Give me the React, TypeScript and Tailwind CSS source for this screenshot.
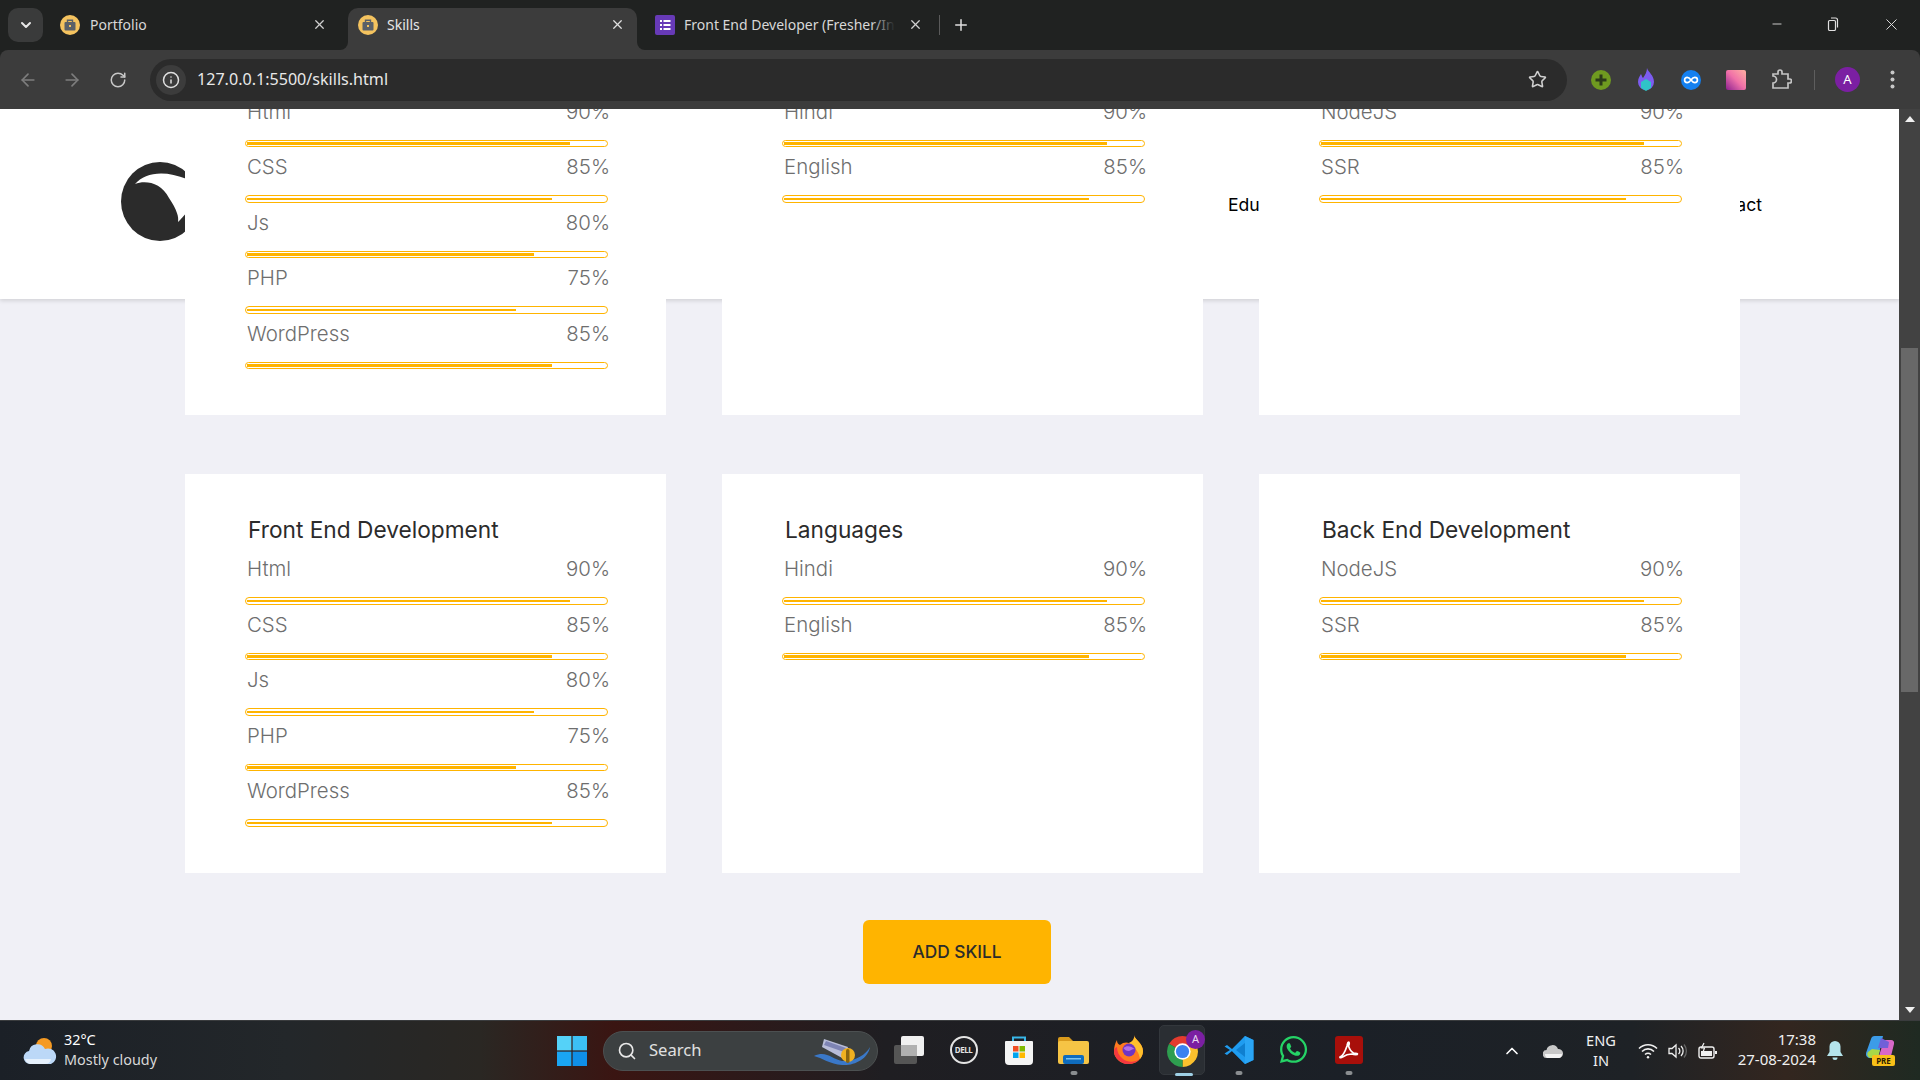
import React from "react";
import { ArrowLeft, ArrowRight, RotateCw, Info, Star, X, Plus, ChevronDown, ChevronUp, Minus, Search } from "lucide-react";
import { FaWhatsapp } from "react-icons/fa";

const chromeFont = { fontFamily: '"Noto Sans", "Open Sans", sans-serif' };

function Favicon() {
  return (
    <svg width="20" height="20" viewBox="0 0 20 20">
      <circle cx="10" cy="10" r="10" fill="#f4c35f" />
      <rect x="4.5" y="7" width="11" height="8.5" rx="1" fill="#5a6068" />
      <path d="M7.5 7V5.2h5V7" fill="none" stroke="#5a6068" strokeWidth="1.4" />
      <rect x="9" y="10" width="2" height="2" fill="#f4c35f" />
    </svg>
  );
}

function FormFavicon() {
  return (
    <svg width="20" height="20" viewBox="0 0 20 20">
      <rect width="20" height="20" rx="2" fill="#673ab7" />
      <rect x="5" y="5" width="2" height="2" fill="#fff" />
      <rect x="8.5" y="5" width="7" height="2" fill="#fff" />
      <rect x="5" y="9" width="2" height="2" fill="#fff" />
      <rect x="8.5" y="9" width="7" height="2" fill="#fff" />
      <rect x="5" y="13" width="2" height="2" fill="#fff" />
      <rect x="8.5" y="13" width="7" height="2" fill="#fff" />
    </svg>
  );
}

function TabStrip() {
  return (
    <div className="h-[50px] bg-[#202221] flex items-end shrink-0 text-[14px]" style={chromeFont}>
      <div className="self-start mt-[8px] ml-[8px] w-[35px] h-[34px] rounded-[10px] bg-[#3a3b3b] flex items-center justify-center">
        <ChevronDown size={16} strokeWidth={3} className="text-[#e8e8e8]" />
      </div>
      <div className="w-[305px] h-[42px] pl-[17px] pr-[21px] pb-[9px] flex items-center text-[#d8d8d8]">
        <Favicon />
        <span className="ml-[10px] flex-1">Portfolio</span>
        <X size={15} strokeWidth={2} className="text-[#d0d0d0]" />
      </div>
      <div className="relative w-[289px] h-[42px] pl-[10px] pr-[12px] pb-[9px] flex items-center rounded-t-[10px] bg-[#3c3c3c] text-[#e8e8e8]">
        <Favicon />
        <span className="ml-[9px] flex-1">Skills</span>
        <X size={15} strokeWidth={2} className="text-[#e0e0e0]" />
        <div className="absolute -left-[8px] bottom-0 w-[8px] h-[8px] bg-[#3c3c3c]">
          <div className="w-[8px] h-[8px] bg-[#202221] rounded-br-[8px]" />
        </div>
        <div className="absolute -right-[8px] bottom-0 w-[8px] h-[8px] bg-[#3c3c3c]">
          <div className="w-[8px] h-[8px] bg-[#202221] rounded-bl-[8px]" />
        </div>
      </div>
      <div className="h-[42px] pl-[18px] pb-[9px] flex items-center text-[#d8d8d8]">
        <FormFavicon />
        <div className="relative ml-[9px] w-[211px] overflow-hidden whitespace-nowrap">
          Front End Developer (Fresher/Internship)
          <div className="absolute right-0 top-0 bottom-0 w-[24px] bg-gradient-to-r from-transparent to-[#202221]" />
        </div>
        <X size={15} strokeWidth={2} className="ml-[13px] text-[#d0d0d0]" />
        <div className="ml-[16px] w-[1px] h-[20px] bg-[#5a5a5a]" />
        <Plus size={18} strokeWidth={2} className="ml-[12px] text-[#e0e0e0]" />
      </div>
      <div className="ml-auto h-[50px] flex items-center pb-[2px] text-[#e0e0e0]">
        <Minus size={14} strokeWidth={1.5} />
        <svg className="ml-[42px]" width="14" height="14" viewBox="0 0 14 14" fill="none" stroke="#e0e0e0" strokeWidth="1.2">
          <rect x="2.5" y="3.5" width="7" height="10" rx="1.2" />
          <path d="M5 1h4.500a2 2 0 0 1 2 2v7.500" />
        </svg>
        <X size={19} strokeWidth={1.2} className="ml-[42px] mr-[19px]" />
      </div>
    </div>
  );
}

function Toolbar() {
  return (
    <div className="h-[59px] bg-[#3c3c3c] rounded-t-[8px] flex items-center shrink-0" style={chromeFont}>
      <ArrowLeft size={20} strokeWidth={2} className="ml-[18px] text-[#7d7d7d]" />
      <ArrowRight size={20} strokeWidth={2} className="ml-[24px] text-[#7d7d7d]" />
      <RotateCw size={18} strokeWidth={2} className="ml-[27px] text-[#c8c8c8]" />
      <div className="ml-[23px] w-[1417px] h-[42px] rounded-full bg-[#2b2b2b] flex items-center pl-[6px] pr-[20px]">
        <div className="w-[30px] h-[30px] rounded-full bg-[#3c3c3c] flex items-center justify-center">
          <Info size={18} strokeWidth={2} className="text-[#e0e0e0]" />
        </div>
        <span className="ml-[11px] text-[16.1px] text-[#e8e8e8] flex-1">127.0.0.1:5500/skills.html</span>
        <Star size={19} strokeWidth={2} className="text-[#d0d0d0]" />
      </div>
      <svg className="ml-[24px]" width="20" height="20" viewBox="0 0 20 20">
        <circle cx="10" cy="10" r="10" fill="#6f9a20" />
        <path d="M10 4.500v11M4.500 10h11" stroke="#2c3a1a" strokeWidth="3" />
      </svg>
      <svg className="ml-[25px]" width="20" height="24" viewBox="0 0 20 24">
        <path d="M11 0c1 4 7 7 7 14a8 8 0 0 1-16 0c0-4 2-6 3-8 1 2 1 3 2 4 2-3 4-6 4-10z" fill="#7c5cf0" />
        <path d="M10 11l5 3v6l-5 3-5-3v-6z" fill="#2fc4c8" />
      </svg>
      <svg className="ml-[25px]" width="20" height="20" viewBox="0 0 20 20">
        <circle cx="10" cy="10" r="10" fill="#1480f0" />
        <path d="M10 10c-1.500-2-2.600-2.600-3.800-2.600a2.600 2.600 0 0 0 0 5.200c1.200 0 2.300-.6 3.800-2.600s2.600-2.600 3.800-2.600a2.600 2.600 0 0 1 0 5.200c-1.200 0-2.300-.6-3.800-2.600z" fill="none" stroke="#fff" strokeWidth="1.7" />
      </svg>
      <div className="ml-[25px] w-[20px] h-[20px] rounded-[2px] bg-gradient-to-bl from-[#ffb0a0] via-[#f070a8] to-[#901a90]" />
      <svg className="ml-[25px]" width="21" height="21" viewBox="0 0 21 21" fill="none" stroke="#c4c4c4" strokeWidth="1.7">
        <path d="M2 5h5V3a2 2 0 0 1 4 0v2h6v5h1.500a2 2 0 0 1 0 4H17v5H2v-5a3 3 0 0 0 0-7z" />
      </svg>
      <div className="ml-[22px] w-[1px] h-[20px] bg-[#5e5e5e]" />
      <div className="ml-[20px] w-[25px] h-[25px] rounded-full bg-[#7b1fa2] flex items-center justify-center text-white text-[13px]">A</div>
      <svg className="ml-[30px]" width="5" height="19" viewBox="0 0 5 19" fill="#c8c8c8">
        <circle cx="2.500" cy="2.500" r="2" />
        <circle cx="2.500" cy="9.500" r="2" />
        <circle cx="2.500" cy="16.500" r="2" />
      </svg>
    </div>
  );
}

type Skill = [string, number];

function Row({ name, pct, thin }: { name: string; pct: number; thin: boolean }) {
  return (
    <div className="mb-[4px]">
      <div className="h-[32px] pl-[2px] -mr-[2px] flex justify-between items-center text-[20.4px] font-light text-[#6e6e6e]">
        <span>{name}</span>
        <span>{pct}%</span>
      </div>
      <div className={thin ? "mt-[12px] h-[8px] border border-[#ffb400] rounded-[4px] px-[1px] py-[2px]" : "mt-[12px] h-[7px] border border-[#ffb400] rounded-[4px] px-[1px] py-[1px]"}>
        <div className="h-full bg-[#ffb400]" style={{ width: `${pct}%` }} />
      </div>
    </div>
  );
}

function Card({ title, skills, first, cls }: { title: string; skills: Skill[]; first: boolean; cls: string }) {
  return (
    <div className={`w-[481px] bg-white pl-[60px] pr-[58px] pt-[40px] ${cls}`}>
      <h3 className="h-[32px] mb-[7px] pl-[3px] flex items-center text-[22.7px] font-normal text-[#2b2b2b]">{title}</h3>
      {skills.map(([n, p], i) => (
        <Row key={n} name={n} pct={p} thin={first ? i % 2 === 1 : i % 2 === 0} />
      ))}
    </div>
  );
}

const fe: Skill[] = [["Html", 90], ["CSS", 85], ["Js", 80], ["PHP", 75], ["WordPress", 85]];
const lang: Skill[] = [["Hindi", 90], ["English", 85]];
const be: Skill[] = [["NodeJS", 90], ["SSR", 85]];

function CardRow({ first }: { first: boolean }) {
  const cls = first ? "h-[398px]" : "h-[399px]";
  return (
    <div className="flex gap-[56px] pl-[185px]">
      <Card title="Front End Development" skills={fe} first={first} cls={cls} />
      <Card title="Languages" skills={lang} first={first} cls={cls} />
      <Card title="Back End Development" skills={be} first={first} cls={cls} />
    </div>
  );
}

function Page() {
  return (
    <div className="flex-1 flex min-h-0 bg-[#f0f0f6] overflow-hidden" style={{ fontFamily: 'Inter, "Liberation Sans", sans-serif' }}>
      <div className="relative flex-1 min-w-0 overflow-hidden">
        <header className="absolute left-0 right-0 top-0 h-[190px] bg-white shadow-[0_2px_4px_rgba(0,0,0,0.12)] flex items-center pl-[121px] pr-[137px]">
          <svg className="mb-[6px]" width="78" height="79" viewBox="0 0 78 79">
            <ellipse cx="39" cy="39.500" rx="39" ry="39.500" fill="#2b2b2b" />
            <path d="M14 22C24 18 40 20 48 36C56 48 58 55 57 60C60 57 62 55 66 50L66 17C44 8 24 10 14 22Z" fill="#ffffff" />
          </svg>
          <nav className="ml-auto w-[534px] mt-[3px] flex justify-between text-[17.6px] font-normal text-black">
            <span>Education</span>
            <span>Contact</span>
          </nav>
        </header>
        <main className="relative z-10 -mt-[92px] flex flex-col">
          <CardRow first={true} />
          <div className="mt-[59px]">
            <CardRow first={false} />
          </div>
          <div className="mt-[47px] pl-[863px]">
            <button className="w-[188px] h-[64px] rounded-[6px] bg-[#ffb400] text-[17.3px] font-medium text-[#2b2b2b]">ADD SKILL</button>
          </div>
        </main>
      </div>
      <div className="w-[21px] bg-[#424242] flex flex-col items-center shrink-0">
        <svg className="mt-[7px]" width="10" height="6" viewBox="0 0 10 6" fill="#f0f0f0"><path d="M5 0l5 6H0z" /></svg>
        <div className="mt-[226px] w-[17px] h-[344px] bg-[#686868]" />
        <svg className="mt-auto mb-[7px]" width="10" height="6" viewBox="0 0 10 6" fill="#f0f0f0"><path d="M5 6l5-6H0z" /></svg>
      </div>
    </div>
  );
}

function Cell({ children, dot }: { children: React.ReactNode; dot?: boolean }) {
  return (
    <div className="relative w-[55px] h-[60px] pb-[2px] flex items-center justify-center">
      {children}
      {dot && <div className="absolute left-1/2 -translate-x-1/2 bottom-[6px] w-[7px] h-[4px] rounded-full bg-[#8a8d90]" />}
    </div>
  );
}

function Taskbar() {
  return (
    <div className="h-[60px] shrink-0 flex items-center text-white border-t border-[#3a3c3e] bg-[linear-gradient(90deg,#1b2027_0%,#23272a_15%,#2a2723_25%,#3a1512_32%,#1f1e22_46%,#1b2027_70%,#1e2226_85%,#33261f_93%,#1f2a22_100%)]" style={chromeFont}>
      <div className="w-[557px] pl-[23px] flex items-center shrink-0">
        <svg width="34" height="28" viewBox="0 0 34 28">
          <circle cx="21" cy="9" r="8" fill="#f59a23" />
          <path d="M7 27a6.500 6.500 0 0 1-1-12.900A8.500 8.500 0 0 1 22 12a6 6 0 0 1 6 15z" fill="#bcd8f7" />
          <path d="M7 27a6.500 6.500 0 0 1-5-5h26a6 6 0 0 1-6 5z" fill="#e6f1fc" />
        </svg>
        <div className="ml-[7px] mb-[2px] leading-[20px] text-[14.4px]">
          <div>32°C</div>
          <div className="text-[#d8d8d8]">Mostly cloudy</div>
        </div>
      </div>
      <svg width="30" height="30" viewBox="0 0 30 30">
        <rect x="0" y="0" width="14.400" height="14.400" fill="#55d2f8" />
        <rect x="15.600" y="0" width="14.400" height="14.400" fill="#3cc0f4" />
        <rect x="0" y="15.600" width="14.400" height="14.400" fill="#1aa5f2" />
        <rect x="15.600" y="15.600" width="14.400" height="14.400" fill="#0f8fe8" />
      </svg>
      <div className="ml-[16px] w-[275px] h-[40px] rounded-full bg-[#3c4041] border border-[#4c5051] flex items-center pl-[13px] pr-[5px]">
        <Search size={20} strokeWidth={2} className="text-[#e8e8e8]" />
        <span className="ml-[12px] text-[16.6px] text-[#e0e0e0]">Search</span>
        <svg className="ml-auto" width="60" height="32" viewBox="0 0 60 32">
          <path d="M2 21 C14 15 20 24 30 26 C42 27 54 20 58 12 C56 24 42 31 30 30 C18 29 10 23 2 21z" fill="#3a78c8" />
          <path d="M12 4 L36 12 L32 24 L10 12z" fill="#b8bcd8" />
          <path d="M14 6 L34 13 L32 17 L12 10z" fill="#7e84b4" />
          <circle cx="36" cy="20" r="7" fill="#f0b020" />
          <rect x="34" y="14" width="3.500" height="14" rx="1.700" fill="#8a6410" />
        </svg>
      </div>
      <div className="ml-[3px] flex">
        <Cell>
          <svg width="30" height="28" viewBox="0 0 30 28">
            <rect x="0" y="9" width="23" height="19" rx="2" fill="#555555" />
            <rect x="7" y="0" width="23" height="20" rx="2" fill="#f0f0f0" />
            <rect x="7" y="9" width="16" height="11" fill="#b0b0b0" />
          </svg>
        </Cell>
        <Cell>
          <div className="w-[28px] h-[28px] rounded-full border-2 border-[#e4e4e4] flex items-center justify-center text-[8px] font-bold tracking-[-0.5px] text-[#e4e4e4]">DELL</div>
        </Cell>
        <Cell>
          <svg width="30" height="30" viewBox="0 0 30 30">
            <path d="M9 7V2.500h12V7" fill="none" stroke="#38b6e8" strokeWidth="2" />
            <path d="M2 6h26a1 1 0 0 1 1 1v19a4 4 0 0 1-4 4H5a4 4 0 0 1-4-4V7a1 1 0 0 1 1-1z" fill="#f4f4f4" />
            <rect x="9" y="11" width="5.500" height="5.500" fill="#f04e23" />
            <rect x="15.500" y="11" width="5.500" height="5.500" fill="#7fba00" />
            <rect x="9" y="17.500" width="5.500" height="5.500" fill="#00a4ef" />
            <rect x="15.500" y="17.500" width="5.500" height="5.500" fill="#ffb900" />
          </svg>
        </Cell>
        <Cell dot>
          <svg width="31" height="28" viewBox="0 0 31 28">
            <path d="M0 3a2 2 0 0 1 2-2h9l4 4v4H0z" fill="#d99a1c" />
            <rect x="0" y="5" width="31" height="23" rx="2" fill="#f6c445" />
            <rect x="5" y="19" width="21" height="9" rx="2" fill="#0f6cbd" />
            <rect x="8" y="22" width="15" height="1.500" fill="#7cc4f0" />
          </svg>
        </Cell>
        <Cell>
          <svg width="29" height="29" viewBox="0 0 29 29">
            <path d="M20 0c0 4 9 8 9 16a14.500 13 0 0 1-29 0C0 12 1 8 3 5c0 3 1 4 3 5 3-3 7-3 9-2 3-1 6-4 5-8z" fill="#ff7a1f" />
            <path d="M20 0c0 4 9 8 9 16 0 3-1 5-3 8-1-7-5-12-11-16 3-1 6-4 5-8z" fill="#ffc02c" />
            <path d="M0 16a14.500 13 0 0 0 26 8c-4 3-12 4-17 0-4-3-6-7-6-12-2 1-3 2-3 4z" fill="#f5383f" />
            <circle cx="15" cy="15" r="6.500" fill="#6f35c4" />
            <path d="M9.500 13c3-3 8-2 11 1-3 0-4 2-6 2-2 0-4-1-5-3z" fill="#b36fe8" />
          </svg>
        </Cell>
        <div className="relative w-[55px] h-[60px] pb-[2px] flex items-center justify-center">
          <div className="absolute left-[3px] top-[4px] w-[46px] h-[50px] rounded-[5px] bg-[#2a2e33] border border-[#33373c]" />
          <div className="absolute left-1/2 -translate-x-1/2 bottom-[5px] w-[18px] h-[3px] rounded-full bg-[#9fd0e6]" />
          <svg className="relative mr-[3px] mt-[3px]" width="31" height="31" viewBox="4 4 40 40">
            <path d="M24 24L6.700 14A20 20 0 0 1 41.300 14Z" fill="#e33b2e" />
            <path d="M24 24L41.300 14A20 20 0 0 1 24 44Z" fill="#fbc02d" />
            <path d="M24 24L24 44A20 20 0 0 1 6.700 14Z" fill="#2e9e4f" />
            <circle cx="24" cy="24" r="10.500" fill="#fff" />
            <circle cx="24" cy="24" r="8.500" fill="#3b82f0" />
          </svg>
          <div className="absolute right-[6px] top-[9px] w-[19px] h-[19px] rounded-full bg-[#7b1fa2] text-[11px] flex items-center justify-center text-[#e8d8f0]">A</div>
        </div>
        <Cell dot>
          <svg width="30" height="30" viewBox="0 0 30 30">
            <path d="M21 1L29.500 5V25L21 29L8 16Z" fill="#0f7fd0" />
            <path d="M21 1L8 14L3 10L0.500 11.500L6 15L0.500 18.500L3 20L8 16L21 29L21 22L12 15L21 8Z" fill="#1f9cf0" />
            <path d="M21 1L29.500 5V25L21 29V22V8Z" fill="#2aa5f5" />
          </svg>
        </Cell>
        <Cell>
          <FaWhatsapp size={31} color="#25d366" />
        </Cell>
        <Cell dot>
          <svg width="28" height="28" viewBox="0 0 28 28">
            <rect width="28" height="28" rx="3" fill="#a80f0a" />
            <path d="M5 21c3-1 5-5 7-11 .5-2 .5-4 1.500-4s1 2 0 4c1 3 3 6 5 7 2 0 4 0 4 1s-3 1-6 0c-3 0-6 1-9 3-1 1-3 1-2.500 0z" fill="none" stroke="#fff" strokeWidth="1.700" />
          </svg>
        </Cell>
      </div>
      <div className="ml-auto flex items-center shrink-0">
        <ChevronUp size={20} strokeWidth={2} className="text-white" />
        <svg className="ml-[21px]" width="20" height="14" viewBox="0 0 20 14">
          <path d="M4 14a4 4 0 0 1-.5-8A6 6 0 0 1 15 5a4.500 4.500 0 0 1 1 9z" fill="#c8c8c8" />
          <path d="M2 10h17a4 4 0 0 1-3 4H4a4 4 0 0 1-2-4z" fill="#f4f4f4" />
        </svg>
        <div className="ml-[18px] mb-[2px] w-[40px] text-center text-[14.6px] leading-[20px] text-[#f0f0f0]">
          <div>ENG</div>
          <div>IN</div>
        </div>
        <svg className="ml-[17px]" width="20" height="16" viewBox="0 0 20 16" fill="none" stroke="#f0f0f0" strokeWidth="1.600">
          <path d="M1 5.500C6 .5 14 .5 19 5.500" />
          <path d="M4 8.500C7.500 5 12.500 5 16 8.500" />
          <path d="M7 11.500C8.800 10 11.200 10 13 11.500" />
          <circle cx="10" cy="14.200" r="1.200" fill="#f0f0f0" stroke="none" />
        </svg>
        <svg className="ml-[10px]" width="20" height="16" viewBox="0 0 20 16" fill="none" stroke="#f0f0f0" strokeWidth="1.300">
          <path d="M1 5.500h3l4-3.500v12l-4-3.500H1z" />
          <path d="M10.500 5a4 4 0 0 1 0 6M13 3a7 7 0 0 1 0 10" />
          <path d="M16 1.500a10 10 0 0 1 0 13" stroke="#666" />
        </svg>
        <svg className="ml-[10px]" width="20" height="18" viewBox="0 0 20 18" fill="none" stroke="#f0f0f0" strokeWidth="1.400">
          <rect x="1" y="5" width="15" height="11" rx="2" />
          <rect x="3" y="9" width="11" height="5" fill="#f0f0f0" stroke="none" />
          <path d="M18 9v3" strokeWidth="2" />
          <path d="M6 1L3.500 6h3L5 10" strokeWidth="1.200" />
        </svg>
        <div className="ml-[19px] mb-[4px] w-[79px] text-right text-[15px] leading-[20px] whitespace-nowrap text-[#f0f0f0]">
          <div>17:38</div>
          <div>27-08-2024</div>
        </div>
        <svg className="ml-[11px]" width="16" height="20" viewBox="0 0 16 20" fill="#b4e4ec">
          <path d="M8 0a5.500 5.500 0 0 1 5.500 5.500V11L16 15H0l2.500-4V5.500A5.500 5.500 0 0 1 8 0z" />
          <path d="M5.500 16.500h5a2.500 2.500 0 0 1-5 0z" />
        </svg>
        <div className="relative ml-[23px] mr-[26px] w-[28px] h-[30px]">
          <svg width="28" height="24" viewBox="0 0 28 24">
            <path d="M9 0h8l-5 22H4a4 4 0 0 1-4-5L5 3a4 4 0 0 1 4-3z" fill="#3c9ce8" />
            <path d="M2 16a4 4 0 0 0 2 6h8l2-8-8-1z" fill="#a8d848" />
            <path d="M18 4h7a3 3 0 0 1 3 4l-3 12a4 4 0 0 1-4 3h-9z" fill="#d868c8" />
            <path d="M15 2l-3 10h10l1-6z" fill="#7060d8" />
          </svg>
          <div className="absolute left-[6px] bottom-0 w-[23px] h-[11px] rounded-[2px] bg-[#f8c018] text-[8px] leading-[11px] font-bold text-center text-[#2a2000]">PRE</div>
        </div>
      </div>
    </div>
  );
}

export default function App() {
  return (
    <div className="w-[1920px] h-[1080px] flex flex-col overflow-hidden bg-[#202221]">
      <TabStrip />
      <Toolbar />
      <Page />
      <Taskbar />
    </div>
  );
}
